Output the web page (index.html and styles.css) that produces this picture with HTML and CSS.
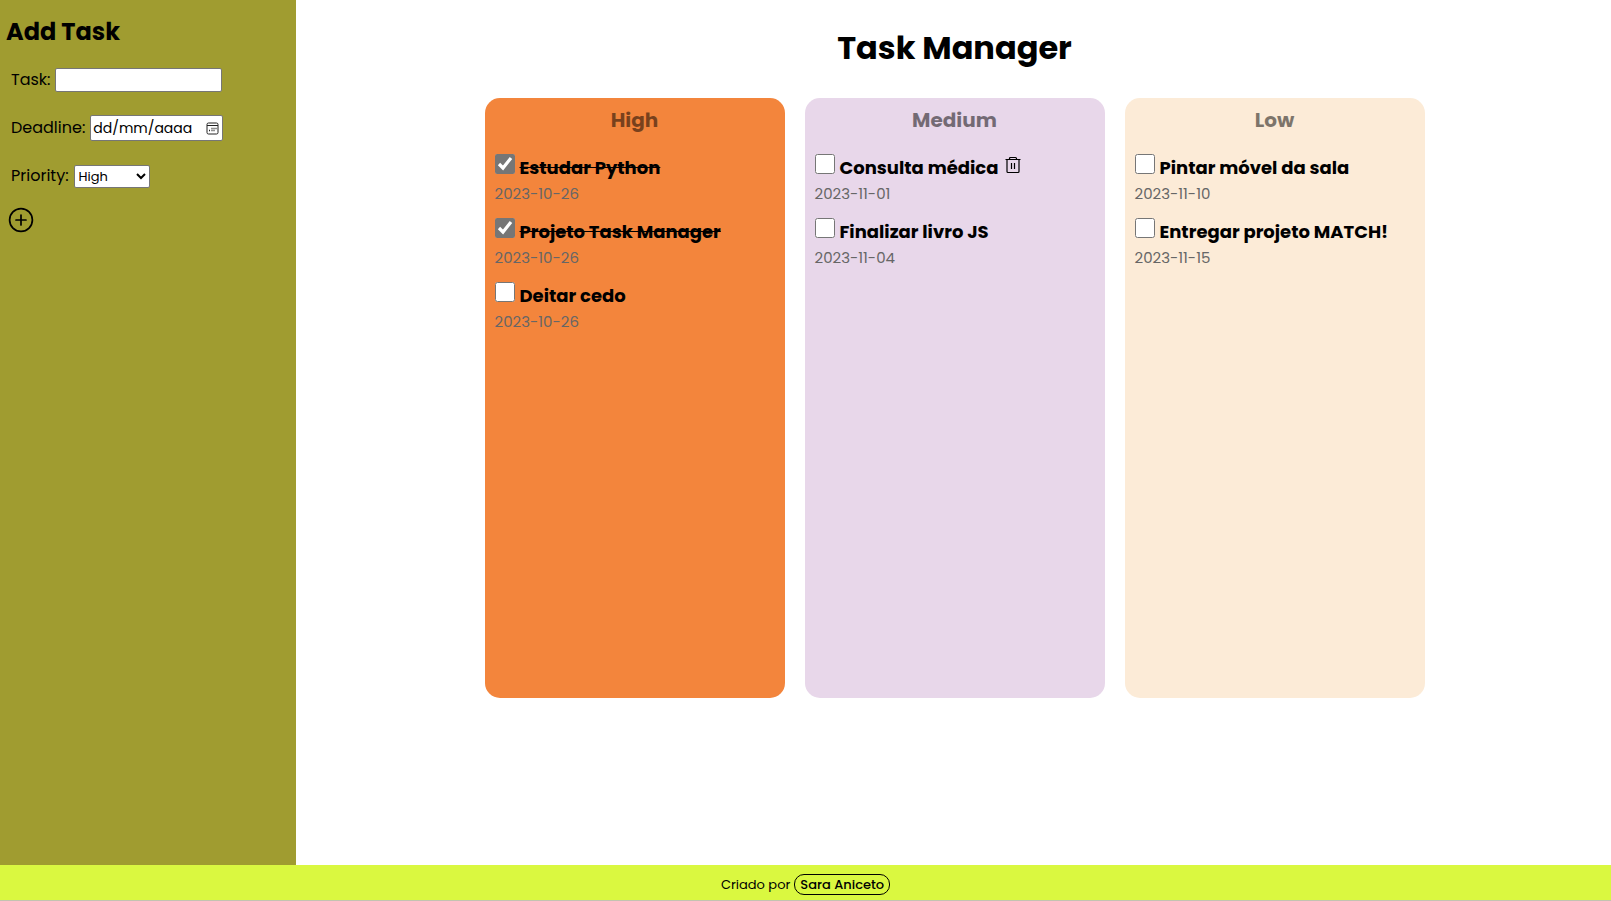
FILE: index.html
```html
<!DOCTYPE html>
<html lang="pt">
<head>
<meta charset="utf-8">
<meta name="viewport" content="width=device-width, initial-scale=1">
<title>Task Manager</title>
<link rel="stylesheet" href="styles.css">
</head>
<body>
<div class="layout">
  <aside class="sidebar">
    <h2 class="sidebar-title">Add Task</h2>
    <form class="task-form">
      <div class="field">
        <label class="field-label" for="task">Task:</label>
        <input class="control control-task" id="task" type="text">
      </div>
      <div class="field">
        <label class="field-label" for="deadline">Deadline:</label>
        <span class="control control-date">
          <input class="date-text" id="deadline" type="text" placeholder="dd/mm/aaaa">
          <button class="icon-button" type="button" aria-label="Calendar">
            <svg width="13" height="13" viewBox="0 0 13 13" fill="none" stroke="#222">
              <rect x="1" y="1" width="11" height="11" rx="1.5"/>
              <path d="M1 3.5h11"/>
              <path d="M5.5 6.5h1M7.5 6.5h1M9.5 6.5h1M3 8.5h1M5.5 8.5h1M7.5 8.5h1" stroke-width="1.4"/>
            </svg>
          </button>
        </span>
      </div>
      <div class="field">
        <label class="field-label" for="priority">Priority:</label>
        <select class="control control-select" id="priority">
          <option>High</option>
          <option>Medium</option>
          <option>Low</option>
        </select>
      </div>
      <button class="icon-button add-button" type="submit" aria-label="Add">
        <svg width="26" height="26" viewBox="0 0 26 26" fill="none" stroke="#000" stroke-width="1.7" stroke-linecap="round">
          <circle cx="13" cy="13" r="11.4"/>
          <path d="M13 8v10M8 13h10"/>
        </svg>
      </button>
    </form>
  </aside>

  <main class="main">
    <h1 class="main-title">Task Manager</h1>
    <div class="board">
      <section class="column column-high">
        <h3 class="column-title">High</h3>
        <ul class="tasks">
          <li class="task">
            <div class="task-row"><input class="check" type="checkbox" id="t1" checked><label class="task-name" for="t1">Estudar Python</label></div>
            <p class="task-date">2023-10-26</p>
          </li>
          <li class="task">
            <div class="task-row"><input class="check" type="checkbox" id="t2" checked><label class="task-name" for="t2">Projeto Task Manager</label></div>
            <p class="task-date">2023-10-26</p>
          </li>
          <li class="task">
            <div class="task-row"><input class="check" type="checkbox" id="t3"><label class="task-name" for="t3">Deitar cedo</label></div>
            <p class="task-date">2023-10-26</p>
          </li>
        </ul>
      </section>
      <section class="column column-medium">
        <h3 class="column-title">Medium</h3>
        <ul class="tasks">
          <li class="task">
            <div class="task-row"><input class="check" type="checkbox" id="t4"><label class="task-name" for="t4">Consulta médica</label>
              <button class="icon-button trash-button" type="button" aria-label="Delete">
                <svg width="16" height="18" viewBox="0 0 16 18" fill="none" stroke="#000" stroke-width="1.2">
                  <path d="M.5 3.5h15M4.5 3.5V2.5Q4.5 1.5 5.5 1.5h5q1 0 1 1v1M2 3.5v12q0 1 1 1h10q1 0 1-1v-12M6.5 7v6M9.5 7v6"/>
                </svg>
              </button>
            </div>
            <p class="task-date">2023-11-01</p>
          </li>
          <li class="task">
            <div class="task-row"><input class="check" type="checkbox" id="t5"><label class="task-name" for="t5">Finalizar livro JS</label></div>
            <p class="task-date">2023-11-04</p>
          </li>
        </ul>
      </section>
      <section class="column column-low">
        <h3 class="column-title">Low</h3>
        <ul class="tasks">
          <li class="task">
            <div class="task-row"><input class="check" type="checkbox" id="t6"><label class="task-name" for="t6">Pintar móvel da sala</label></div>
            <p class="task-date">2023-11-10</p>
          </li>
          <li class="task">
            <div class="task-row"><input class="check" type="checkbox" id="t7"><label class="task-name" for="t7">Entregar projeto MATCH!</label></div>
            <p class="task-date">2023-11-15</p>
          </li>
        </ul>
      </section>
    </div>
  </main>
</div>
<footer class="footer">Criado por <a class="author" href="#">Sara Aniceto</a></footer>
</body>
</html>
```
FILE: styles.css
```css
* {
  box-sizing: border-box;
}

body {
  margin: 0;
  min-height: 100vh;
  display: flex;
  flex-direction: column;
  font-family: Poppins, Inter, sans-serif;
  font-size: 16px;
  color: #000;
  background: #fff;
}

h1, h2, h3, p, ul {
  margin: 0;
  padding: 0;
}

input, select, button {
  font-family: inherit;
}

.layout {
  flex: 1;
  display: flex;
}

.sidebar {
  width: 296px;
  flex-shrink: 0;
  padding: 14px 6px;
  background: #a09c30;
}

.sidebar-title {
  font-size: 24px;
  line-height: 36px;
  font-weight: 700;
}

.task-form {
  display: flex;
  flex-direction: column;
  align-items: flex-start;
  padding-top: 6px;
}

.field {
  display: flex;
  align-items: center;
  gap: 5px;
  height: 48px;
  padding-left: 5px;
}

.field-label {
  padding-bottom: 2px;
}

.control {
  border: 1px solid #767676;
  border-radius: 2px;
  background: #fff;
  color: #000;
  font-size: 13px;
}

.control-task {
  width: 167px;
  height: 24px;
}

.control-date {
  display: flex;
  align-items: center;
  width: 133px;
  height: 26px;
  padding: 0 3px 0 2px;
}

.date-text {
  flex: 1;
  min-width: 0;
  padding: 0;
  border: 0;
  font-size: 14px;
  background: none;
}

.date-text::placeholder {
  color: #000;
}

.control-select {
  width: 76px;
  height: 23px;
}

.icon-button {
  display: flex;
  padding: 0;
  border: 0;
  background: none;
}

.add-button {
  margin: 7px 2px;
}

.main {
  flex: 1;
  padding: 24px 20px 24px 22px;
}

.main-title {
  font-size: 32px;
  line-height: 48px;
  font-weight: 700;
  text-align: center;
}

.board {
  display: flex;
  justify-content: center;
  gap: 20px;
  padding-top: 26px;
}

.column {
  width: 300px;
  min-height: 600px;
  padding: 6px 10px;
  border-radius: 15px;
}

.column-high {
  background: #f3853c;
}

.column-medium {
  background: #e8d7ea;
}

.column-low {
  background: #fcebd7;
}

.column-title {
  font-size: 20px;
  line-height: 32px;
  font-weight: 700;
  text-align: center;
  opacity: 0.5;
}

.tasks {
  display: flex;
  flex-direction: column;
  gap: 12px;
  padding-top: 18px;
  list-style: none;
}

.task-row {
  display: flex;
  align-items: flex-start;
  height: 28px;
}

.check {
  width: 20px;
  height: 20px;
  margin: 0 5px 0 0;
  accent-color: #767676;
}

.task-name {
  font-size: 18px;
  line-height: 28px;
  font-weight: 700;
}

.check:checked + .task-name {
  text-decoration: line-through;
}

.trash-button {
  margin: 2px 7px;
}

.task-date {
  font-size: 15px;
  line-height: 24px;
  color: #666;
}

.footer {
  display: flex;
  align-items: center;
  justify-content: center;
  gap: 4px;
  height: 36px;
  padding-top: 4px;
  border-bottom: 1px solid #c3c3b0;
  background: #daf840;
  font-size: 13px;
}

.author {
  padding: 0 5px;
  border: 1px solid #000;
  border-radius: 10px;
  line-height: 19px;
  font-weight: 500;
  color: #000;
  text-decoration: none;
}
```
